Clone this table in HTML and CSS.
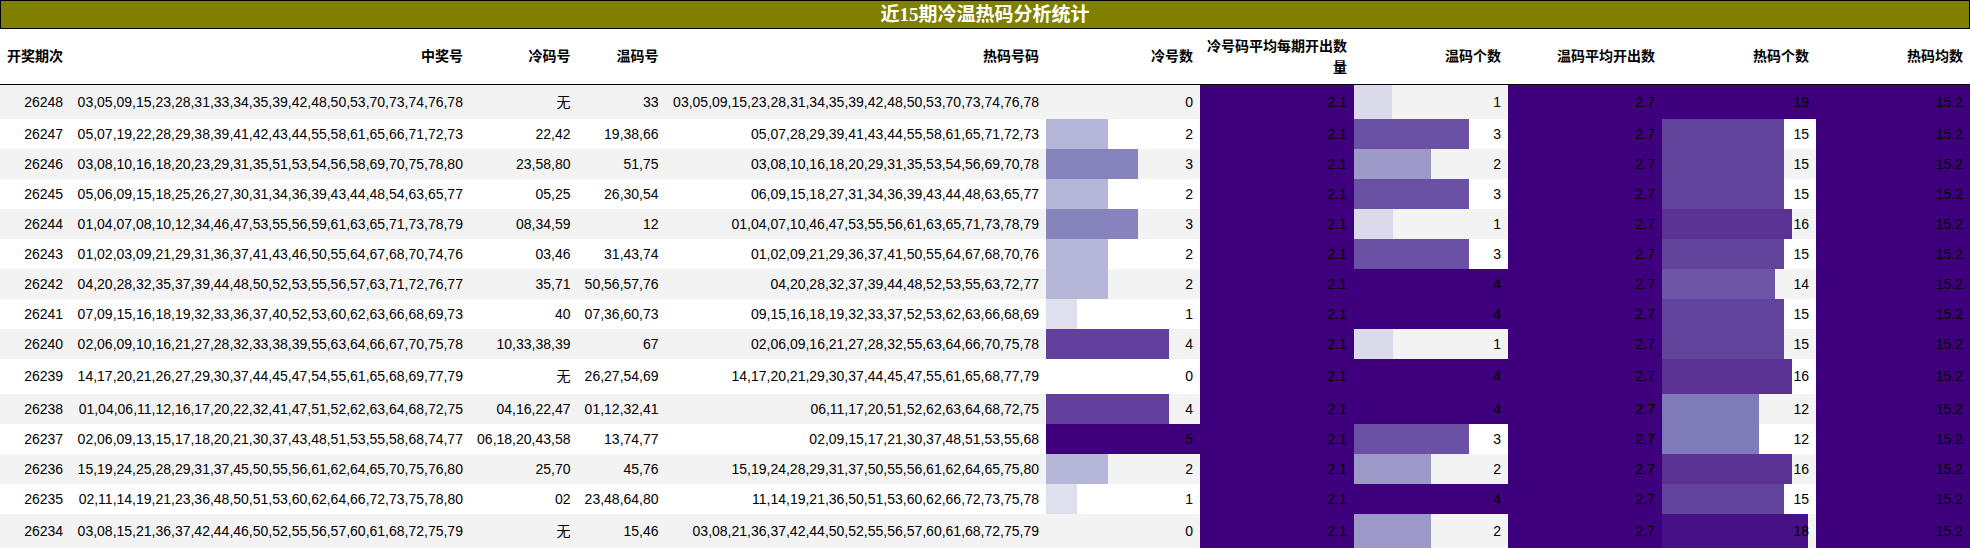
FILE: index.html
```html
<!DOCTYPE html>
<html lang="zh">
<head>
<meta charset="utf-8">
<title>近15期冷温热码分析统计</title>
<link rel="stylesheet" href="styles.css">
</head>
<body>
<table class="stats">
  <caption class="title">近15期冷温热码分析统计</caption>
  <thead>
    <tr>
      <th>开奖期次</th>
      <th>中奖号</th>
      <th>冷码号</th>
      <th>温码号</th>
      <th>热码号码</th>
      <th>冷号数</th>
      <th>冷号码平均每期开出数量</th>
      <th>温码个数</th>
      <th>温码平均开出数</th>
      <th>热码个数</th>
      <th>热码均数</th>
    </tr>
  </thead>
  <tbody>
    <tr><td>26248</td><td>03,05,09,15,23,28,31,33,34,35,39,42,48,50,53,70,73,74,76,78</td><td><span class="none">无</span></td><td>33</td><td>03,05,09,15,23,28,31,34,35,39,42,48,50,53,70,73,74,76,78</td><td class="bar">0</td><td class="bar full">2.1</td><td class="bar" style="--w:25%;--c:#dadaeb">1</td><td class="bar full">2.7</td><td class="bar full">19</td><td class="bar full">15.2</td></tr>
    <tr><td>26247</td><td>05,07,19,22,28,29,38,39,41,42,43,44,55,58,61,65,66,71,72,73</td><td>22,42</td><td>19,38,66</td><td>05,07,28,29,39,41,43,44,55,58,61,65,71,72,73</td><td class="bar" style="--w:40%;--c:#b6b6d8">2</td><td class="bar full">2.1</td><td class="bar" style="--w:75%;--c:#6a51a3">3</td><td class="bar full">2.7</td><td class="bar" style="--w:78.95%;--c:#63449d">15</td><td class="bar full">15.2</td></tr>
    <tr><td>26246</td><td>03,08,10,16,18,20,23,29,31,35,51,53,54,56,58,69,70,75,78,80</td><td>23,58,80</td><td>51,75</td><td>03,08,10,16,18,20,29,31,35,53,54,56,69,70,78</td><td class="bar" style="--w:60%;--c:#8683bd">3</td><td class="bar full">2.1</td><td class="bar" style="--w:50%;--c:#9e9ac8">2</td><td class="bar full">2.7</td><td class="bar" style="--w:78.95%;--c:#63449d">15</td><td class="bar full">15.2</td></tr>
    <tr><td>26245</td><td>05,06,09,15,18,25,26,27,30,31,34,36,39,43,44,48,54,63,65,77</td><td>05,25</td><td>26,30,54</td><td>06,09,15,18,27,31,34,36,39,43,44,48,63,65,77</td><td class="bar" style="--w:40%;--c:#b6b6d8">2</td><td class="bar full">2.1</td><td class="bar" style="--w:75%;--c:#6a51a3">3</td><td class="bar full">2.7</td><td class="bar" style="--w:78.95%;--c:#63449d">15</td><td class="bar full">15.2</td></tr>
    <tr><td>26244</td><td>01,04,07,08,10,12,34,46,47,53,55,56,59,61,63,65,71,73,78,79</td><td>08,34,59</td><td>12</td><td>01,04,07,10,46,47,53,55,56,61,63,65,71,73,78,79</td><td class="bar" style="--w:60%;--c:#8683bd">3</td><td class="bar full">2.1</td><td class="bar" style="--w:25%;--c:#dadaeb">1</td><td class="bar full">2.7</td><td class="bar" style="--w:84.21%;--c:#5a3294">16</td><td class="bar full">15.2</td></tr>
    <tr><td>26243</td><td>01,02,03,09,21,29,31,36,37,41,43,46,50,55,64,67,68,70,74,76</td><td>03,46</td><td>31,43,74</td><td>01,02,09,21,29,36,37,41,50,55,64,67,68,70,76</td><td class="bar" style="--w:40%;--c:#b6b6d8">2</td><td class="bar full">2.1</td><td class="bar" style="--w:75%;--c:#6a51a3">3</td><td class="bar full">2.7</td><td class="bar" style="--w:78.95%;--c:#63449d">15</td><td class="bar full">15.2</td></tr>
    <tr><td>26242</td><td>04,20,28,32,35,37,39,44,48,50,52,53,55,56,57,63,71,72,76,77</td><td>35,71</td><td>50,56,57,76</td><td>04,20,28,32,37,39,44,48,52,53,55,63,72,77</td><td class="bar" style="--w:40%;--c:#b6b6d8">2</td><td class="bar full">2.1</td><td class="bar full">4</td><td class="bar full">2.7</td><td class="bar" style="--w:73.68%;--c:#6c56a5">14</td><td class="bar full">15.2</td></tr>
    <tr><td>26241</td><td>07,09,15,16,18,19,32,33,36,37,40,52,53,60,62,63,66,68,69,73</td><td>40</td><td>07,36,60,73</td><td>09,15,16,18,19,32,33,37,52,53,62,63,66,68,69</td><td class="bar" style="--w:20%;--c:#e0dfee">1</td><td class="bar full">2.1</td><td class="bar full">4</td><td class="bar full">2.7</td><td class="bar" style="--w:78.95%;--c:#63449d">15</td><td class="bar full">15.2</td></tr>
    <tr><td>26240</td><td>02,06,09,10,16,21,27,28,32,33,38,39,55,63,64,66,67,70,75,78</td><td>10,33,38,39</td><td>67</td><td>02,06,09,16,21,27,28,32,55,63,64,66,70,75,78</td><td class="bar" style="--w:80%;--c:#61409b">4</td><td class="bar full">2.1</td><td class="bar" style="--w:25%;--c:#dadaeb">1</td><td class="bar full">2.7</td><td class="bar" style="--w:78.95%;--c:#63449d">15</td><td class="bar full">15.2</td></tr>
    <tr><td>26239</td><td>14,17,20,21,26,27,29,30,37,44,45,47,54,55,61,65,68,69,77,79</td><td><span class="none">无</span></td><td>26,27,54,69</td><td>14,17,20,21,29,30,37,44,45,47,55,61,65,68,77,79</td><td class="bar">0</td><td class="bar full">2.1</td><td class="bar full">4</td><td class="bar full">2.7</td><td class="bar" style="--w:84.21%;--c:#5a3294">16</td><td class="bar full">15.2</td></tr>
    <tr><td>26238</td><td>01,04,06,11,12,16,17,20,22,32,41,47,51,52,62,63,64,68,72,75</td><td>04,16,22,47</td><td>01,12,32,41</td><td>06,11,17,20,51,52,62,63,64,68,72,75</td><td class="bar" style="--w:80%;--c:#61409b">4</td><td class="bar full">2.1</td><td class="bar full">4</td><td class="bar full">2.7</td><td class="bar" style="--w:63.16%;--c:#7f7bb9">12</td><td class="bar full">15.2</td></tr>
    <tr><td>26237</td><td>02,06,09,13,15,17,18,20,21,30,37,43,48,51,53,55,58,68,74,77</td><td>06,18,20,43,58</td><td>13,74,77</td><td>02,09,15,17,21,30,37,48,51,53,55,68</td><td class="bar full">5</td><td class="bar full">2.1</td><td class="bar" style="--w:75%;--c:#6a51a3">3</td><td class="bar full">2.7</td><td class="bar" style="--w:63.16%;--c:#7f7bb9">12</td><td class="bar full">15.2</td></tr>
    <tr><td>26236</td><td>15,19,24,25,28,29,31,37,45,50,55,56,61,62,64,65,70,75,76,80</td><td>25,70</td><td>45,76</td><td>15,19,24,28,29,31,37,50,55,56,61,62,64,65,75,80</td><td class="bar" style="--w:40%;--c:#b6b6d8">2</td><td class="bar full">2.1</td><td class="bar" style="--w:50%;--c:#9e9ac8">2</td><td class="bar full">2.7</td><td class="bar" style="--w:84.21%;--c:#5a3294">16</td><td class="bar full">15.2</td></tr>
    <tr><td>26235</td><td>02,11,14,19,21,23,36,48,50,51,53,60,62,64,66,72,73,75,78,80</td><td>02</td><td>23,48,64,80</td><td>11,14,19,21,36,50,51,53,60,62,66,72,73,75,78</td><td class="bar" style="--w:20%;--c:#e0dfee">1</td><td class="bar full">2.1</td><td class="bar full">4</td><td class="bar full">2.7</td><td class="bar" style="--w:78.95%;--c:#63449d">15</td><td class="bar full">15.2</td></tr>
    <tr><td>26234</td><td>03,08,15,21,36,37,42,44,46,50,52,55,56,57,60,61,68,72,75,79</td><td><span class="none">无</span></td><td>15,46</td><td>03,08,21,36,37,42,44,50,52,55,56,57,60,61,68,72,75,79</td><td class="bar">0</td><td class="bar full">2.1</td><td class="bar" style="--w:50%;--c:#9e9ac8">2</td><td class="bar full">2.7</td><td class="bar" style="--w:94.74%;--c:#481085">18</td><td class="bar full">15.2</td></tr>
  </tbody>
</table>
</body>
</html>
```

FILE: styles.css
```css
html, body {
  margin: 0;
  padding: 0;
  background: #ffffff;
}

.stats {
  width: 100%;
  border-collapse: collapse;
  border-spacing: 0;
  font-family: "Liberation Sans", "Noto Sans CJK SC", sans-serif;
  font-size: 14px;
  color: #000000;
}

.title {
  border: 1px solid #000000;
  background: #808000;
  color: #ffffff;
  font-family: "Liberation Serif", "Noto Sans CJK SC", serif;
  font-size: 19px;
  font-weight: bold;
  line-height: 27px;
  text-align: center;
}

.stats th {
  padding: 7px;
  font-weight: bold;
  line-height: 20.5px;
  text-align: right;
  vertical-align: middle;
  background: #ffffff;
  border-bottom: 1px solid #000000;
}

.stats td {
  padding: 7px;
  line-height: 16px;
  text-align: right;
  vertical-align: middle;
  white-space: nowrap;
}

.stats td .none {
  display: inline-block;
  height: 20.33px;
  line-height: 20.33px;
  vertical-align: middle;
}

.stats tbody tr:nth-child(odd) {
  background: #f3f3f3;
}

.stats tbody tr:nth-child(even) {
  background: #ffffff;
}

.stats td.bar {
  --w: 0%;
  --c: transparent;
  width: 140px;
  background-image: linear-gradient(90deg, var(--c) var(--w), transparent var(--w));
}

.stats td.bar.full {
  --w: 100%;
  --c: #3f007d;
}
```
